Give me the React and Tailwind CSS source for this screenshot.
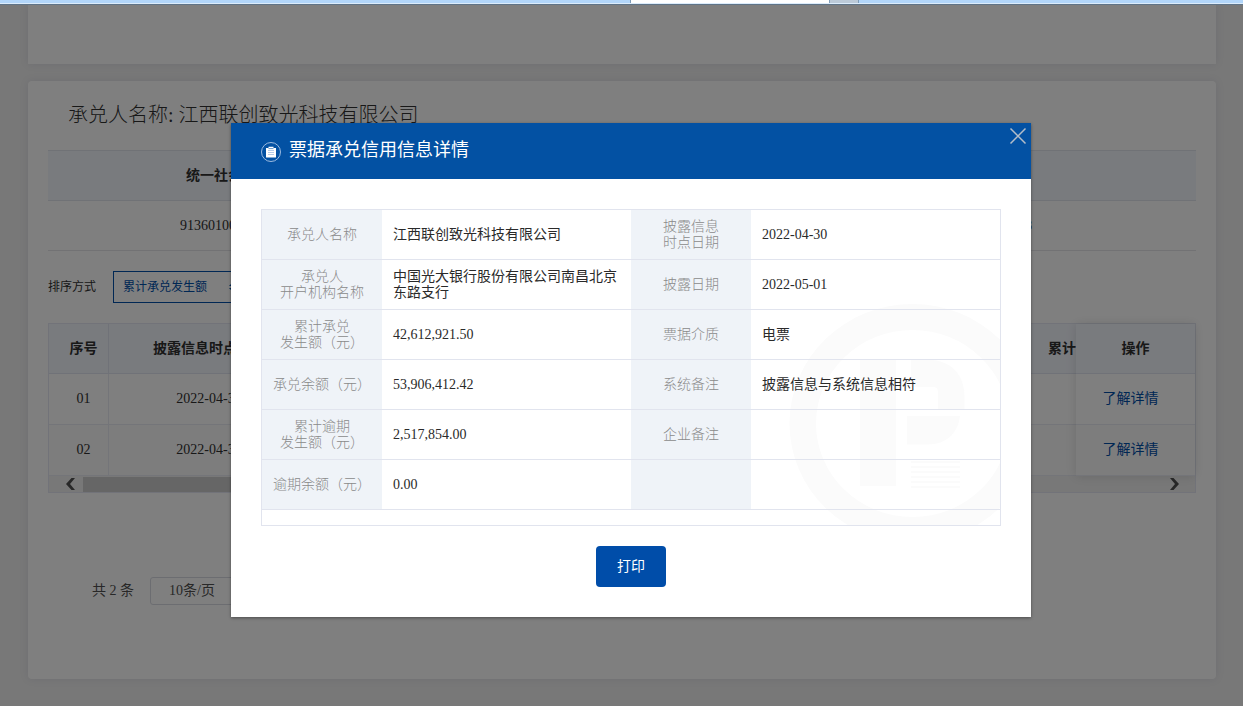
const details = [
  ["承兑人名称", "江西联创致光科技有限公司", "披露信息\n时点日期", "2022-04-30"],
  ["承兑人\n开户机构名称", "中国光大银行股份有限公司南昌北京东路支行", "披露日期", "2022-05-01"],
  ["累计承兑\n发生额（元）", "42,612,921.50", "票据介质", "电票"],
  ["承兑余额（元）", "53,906,412.42", "系统备注", "披露信息与系统信息相符"],
  ["累计逾期\n发生额（元）", "2,517,854.00", "企业备注", ""],
  ["逾期余额（元）", "0.00", "", ""],
];

const records = [
  { no: "01", date: "2022-04-30" },
  { no: "02", date: "2022-04-30" },
];

function TabStrip() {
  return (
    <div className="flex h-[5px] flex-col">
      <div className="flex h-[3px] bg-[#b2d6fa] pl-[630px]">
        <div className="w-[200px] border-x border-[#7f9db9] bg-white" />
        <div className="w-[29px] border-r border-[#7f9db9] bg-[#bccad8]" />
      </div>
      <div className="h-px bg-[#dcecfb]" />
      <div className="h-px bg-[#5f7488]" />
    </div>
  );
}

function ClipboardIcon() {
  return (
    <svg className="mt-1 size-5" viewBox="0 0 20 20" fill="none" aria-hidden="true">
      <circle cx="10" cy="10" r="9.5" stroke="#9dbbe0" />
      <path d="M5 6h2.500V4.800h5V6H15v9.500H5z" fill="#fff" />
      <path d="M7.500 6.600h5" stroke="#0351a3" strokeWidth="0.6" />
      <path d="M7 8.500h6M7 10.500h6M7 12.500h6" stroke="#b4cae8" />
    </svg>
  );
}

function Watermark() {
  return (
    <svg
      className="absolute right-0 bottom-0 h-[221px] w-[211px]"
      viewBox="0 0 211 221"
      fill="#fbfbfb"
      aria-hidden="true"
    >
      <path
        fillRule="evenodd"
        d="M0.5 119.5a123 119.5 0 1 0 246 0a123 119.5 0 1 0 -246 0zM27 119.5a96.5 93.5 0 1 0 193 0a96.5 93.5 0 1 0 -193 0z"
      />
      <path d="M71 56h36v126H71z" />
      <path d="M122 56h20C163 57 175.500 72 175.500 92v13H149V88q0-5-5-5h-22z" />
      <path d="M118 112h53c-2 17-14 28.500-32 28.500h-21z" />
      <path d="M122 157h49v2h-49zM122 162h49v2h-49zM122 167h49v2h-49zM122 172h49v2h-49zM122 177h49v2h-49zM122 182h49v2h-49z" />
    </svg>
  );
}

function CompanyTable() {
  return (
    <table className="mt-[21px] w-full table-fixed border-separate border-spacing-0 text-left text-sm">
      <thead>
        <tr className="h-[51px] bg-[#f3f6fd]">
          <th className="border-y border-[#e0e4ed] pl-[138px] font-bold">统一社会信用代码</th>
          <th className="border-y border-[#e0e4ed]" />
        </tr>
      </thead>
      <tbody>
        <tr className="h-[50px]">
          <td className="border-b border-[#e4e4e9] pl-[132px]">91360100</td>
          <td className="border-b border-[#e4e4e9] pr-[164px] text-right">8</td>
        </tr>
      </tbody>
    </table>
  );
}

function SortBar() {
  return (
    <div className="mt-5 flex items-center gap-[17px] text-xs">
      <span>排序方式</span>
      <button className="flex h-8 items-center gap-[22px] border border-[#004ea9] px-[9px] text-[#004ea9]">
        累计承兑发生额
        <svg className="h-3 w-2" viewBox="0 0 8 12" fill="currentColor" aria-hidden="true">
          <path d="M0 5l4-4 4 4zM0 7h8l-4 4z" />
        </svg>
      </button>
    </div>
  );
}

function RecordTable() {
  const head = "border-b border-[#e0e4f0] font-bold";
  const cell = "border-b border-[#e8eaf2]";
  return (
    <div className="mt-5 border border-[#e4e7f2]">
      <div className="flex">
        <table className="flex-1 table-fixed border-separate border-spacing-0 text-sm">
          <thead>
            <tr className="h-[50px] bg-[#f3f6fd]">
              <th className={`${head} w-[60px] border-r pl-[10px]`}>序号</th>
              <th className={`${head} w-[200px]`}>披露信息时点日期</th>
              <th className={`${head} text-right`}>累计</th>
            </tr>
          </thead>
          <tbody>
            {records.map((row) => (
              <tr key={row.no} className="h-[51px] even:bg-[#fafafa]">
                <td className={`${cell} border-r pl-[10px] text-center`}>{row.no}</td>
                <td className={`${cell} text-center`}>{row.date}</td>
                <td className={cell} />
              </tr>
            ))}
          </tbody>
        </table>
        {/* pinned action column */}
        <table className="relative w-[119px] border-separate border-spacing-0 bg-white text-sm shadow-[0_0_10px_rgba(0,0,0,0.12)]">
          <thead>
            <tr className="h-[50px] bg-[#f3f6fd]">
              <th className={head}>操作</th>
            </tr>
          </thead>
          <tbody>
            {records.map((row) => (
              <tr key={row.no} className="h-[51px] even:bg-[#fafafa]">
                <td className={`${cell} pr-[10px] text-center`}>
                  <a href="#detail" className="text-[#004ea9]">
                    了解详情
                  </a>
                </td>
              </tr>
            ))}
          </tbody>
        </table>
      </div>
      <div className="flex h-4 items-center bg-[#f0f0f0] text-[#505050]">
        <button aria-label="向左滚动" className="flex w-[34px] justify-end pr-2">
          <svg className="h-3 w-[9px]" viewBox="0 0 9 12" fill="currentColor" aria-hidden="true">
            <path d="M5.500 0H9L4 6l5 6H5.500L0 6z" />
          </svg>
        </button>
        <div className="h-[15px] w-[500px] bg-[#cdcdcd]" />
        <button aria-label="向右滚动" className="ml-auto pr-4">
          <svg className="h-3 w-[9px]" viewBox="0 0 9 12" fill="currentColor" aria-hidden="true">
            <path d="M3.500 0H0l5 6-5 6h3.500L9 6z" />
          </svg>
        </button>
      </div>
    </div>
  );
}

function DetailDialog() {
  const label = "w-[120px] border-b border-[#e1e4ee] bg-[#eff3f8] font-light whitespace-pre-line text-[#8a8a8a]";
  const value = "border-b border-[#e1e4ee] px-[11px] text-[#2a2a2a]";
  return (
    <div
      role="dialog"
      aria-labelledby="dialog-title"
      className="w-[800px] bg-white shadow-[0_1px_3px_rgba(0,0,0,0.4)]"
    >
      <header className="flex h-14 items-start justify-between bg-[#0351a3] text-white">
        <div className="flex items-center gap-2 pt-[14px] pl-[30px]">
          <ClipboardIcon />
          <h2 id="dialog-title" className="text-lg leading-[26px]">
            票据承兑信用信息详情
          </h2>
        </div>
        <button aria-label="关闭" className="pt-1 pr-1 text-[#b4bdc9]">
          <svg className="size-[18px]" viewBox="0 0 18 18" fill="none" stroke="currentColor" strokeWidth="1.5">
            <path d="M1.500 1.500l15 15M16.500 1.500l-15 15" />
          </svg>
        </button>
      </header>

      <div className="px-[30px] py-[30px]">
        <div className="relative overflow-hidden border border-[#e1e4ee] pb-[15px]">
          <Watermark />
          <table className="relative w-full table-fixed border-separate border-spacing-0 text-sm leading-4">
            <tbody>
              {details.map((row) => (
                <tr key={row[0]} className="h-[50px]">
                  <th className={label}>{row[0]}</th>
                  <td className={value}>{row[1]}</td>
                  <th className={label}>{row[2]}</th>
                  <td className={value}>{row[3]}</td>
                </tr>
              ))}
            </tbody>
          </table>
        </div>
        <div className="mt-5 flex justify-center">
          <button className="rounded bg-[#004da9] px-[21px] py-[10px] text-sm leading-[21px] text-white">
            打印
          </button>
        </div>
      </div>
    </div>
  );
}

export default function App() {
  return (
    <div className="flex min-h-screen flex-col font-['Liberation_Serif','Noto_Sans_CJK_SC',serif] text-[#303030]">
      <TabStrip />
      <div className="relative flex-1 overflow-hidden bg-[#f0f0f0]">
        <main className="pr-[27px] pb-[27px] pl-7">
          <section className="h-[59px] bg-white shadow-[0_0_8px_rgba(90,90,150,0.12)]" />
          <section className="mt-[17px] rounded bg-white px-5 pt-5 pb-[74px] shadow-[0_0_8px_rgba(90,90,150,0.12)]">
            <h1 className="pl-5 text-xl leading-7 font-light">承兑人名称: 江西联创致光科技有限公司</h1>
            <CompanyTable />
            <SortBar />
            <RecordTable />
            <div className="mt-[84px] flex items-center gap-4 pl-11 text-sm text-[#505050]">
              <span>共 2 条</span>
              <select
                aria-label="每页条数"
                className="h-7 w-[100px] appearance-none rounded-[3px] border border-[#d8dbe3] pl-[18px] text-sm"
              >
                <option>10条/页</option>
              </select>
            </div>
          </section>
        </main>
        <div className="absolute inset-0 flex items-start justify-center bg-black/50 pt-[118px] pl-[19px]">
          <DetailDialog />
        </div>
      </div>
    </div>
  );
}
